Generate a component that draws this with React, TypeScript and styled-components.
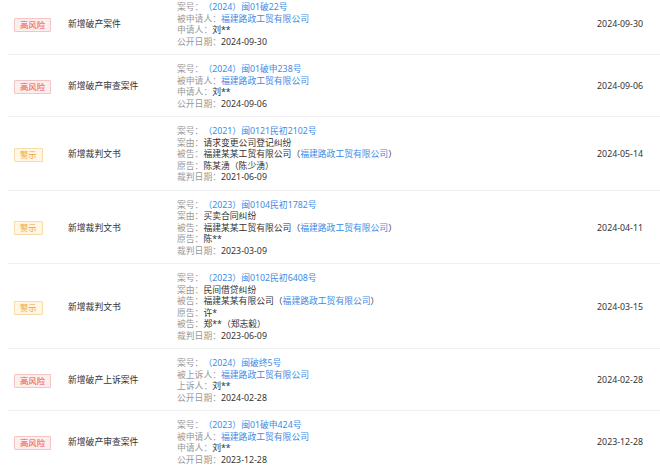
import React from "react";
import styled, { createGlobalStyle } from "styled-components";

const Global = createGlobalStyle`
  html, body { margin: 0; padding: 0; background: #fff; }
  body {
    font-family: "Noto Sans", "Noto Sans CJK SC", sans-serif;
    overflow: hidden;
    text-spacing-trim: space-all;
  }
`;

const Page = styled.div`
  padding-left: 8px;
  width: 652px;
  margin-top: -8px;
`;

const Row = styled.div`
  display: grid;
  grid-template-columns: 60px 109px 1fr 90px;
  align-items: center;
  border-top: 1px solid #f0f0f0;
  padding: 9px 0 6px;
  font-size: 8.8px;
  line-height: 11.5px;
  color: #333;
`;

const Badge = styled.span<{ $kind: "high" | "warn" }>`
  justify-self: start;
  margin-left: 6px;
  display: inline-block;
  padding: 0 5px;
  height: 12px;
  line-height: 12px;
  font-size: 8.4px;
  border: 1px solid ${(p) => (p.$kind === "high" ? "#f7c4c4" : "#f6dca6")};
  background: ${(p) => (p.$kind === "high" ? "#fdeeee" : "#fff6e3")};
  color: ${(p) => (p.$kind === "high" ? "#ec4d4d" : "#f2a531")};
  border-radius: 1px;
`;

const Category = styled.div`
  color: #333;
`;

const Details = styled.div`
  display: flex;
  flex-direction: column;
`;

const Line = styled.div`
  white-space: nowrap;
  text-spacing-trim: space-all;
`;

const Label = styled.span`
  color: #999;
`;

const Link = styled.span`
  color: #3d8be6;
`;

const DateCell = styled.div`
  text-align: right;
  padding-right: 17px;
  color: #333;
`;

type Part = string | { link: string };
type Item = {
  kind: "high" | "warn";
  badge: string;
  category: string;
  lines: [string, Part[]][];
  date: string;
};

const company = { link: "福建路政工贸有限公司" };

const items: Item[] = [
  {
    kind: "high",
    badge: "高风险",
    category: "新增破产案件",
    lines: [
      ["案号：", [{ link: "（2024）闽01破22号" }]],
      ["被申请人：", [company]],
      ["申请人：", ["刘**"]],
      ["公开日期：", ["2024-09-30"]],
    ],
    date: "2024-09-30",
  },
  {
    kind: "high",
    badge: "高风险",
    category: "新增破产审查案件",
    lines: [
      ["案号：", [{ link: "（2024）闽01破申238号" }]],
      ["被申请人：", [company]],
      ["申请人：", ["刘**"]],
      ["公开日期：", ["2024-09-06"]],
    ],
    date: "2024-09-06",
  },
  {
    kind: "warn",
    badge: "警示",
    category: "新增裁判文书",
    lines: [
      ["案号：", [{ link: "（2021）闽0121民初2102号" }]],
      ["案由：", ["请求变更公司登记纠纷"]],
      ["被告：", ["福建某某工贸有限公司（", company, "）"]],
      ["原告：", ["陈某湧（陈少湧）"]],
      ["裁判日期：", ["2021-06-09"]],
    ],
    date: "2024-05-14",
  },
  {
    kind: "warn",
    badge: "警示",
    category: "新增裁判文书",
    lines: [
      ["案号：", [{ link: "（2023）闽0104民初1782号" }]],
      ["案由：", ["买卖合同纠纷"]],
      ["被告：", ["福建某某工贸有限公司（", company, "）"]],
      ["原告：", ["陈**"]],
      ["裁判日期：", ["2023-03-09"]],
    ],
    date: "2024-04-11",
  },
  {
    kind: "warn",
    badge: "警示",
    category: "新增裁判文书",
    lines: [
      ["案号：", [{ link: "（2023）闽0102民初6408号" }]],
      ["案由：", ["民间借贷纠纷"]],
      ["被告：", ["福建某某有限公司（", company, "）"]],
      ["原告：", ["许*"]],
      ["被告：", ["郑**（郑志毅）"]],
      ["裁判日期：", ["2023-06-09"]],
    ],
    date: "2024-03-15",
  },
  {
    kind: "high",
    badge: "高风险",
    category: "新增破产上诉案件",
    lines: [
      ["案号：", [{ link: "（2024）闽破终5号" }]],
      ["被上诉人：", [company]],
      ["上诉人：", ["刘**"]],
      ["公开日期：", ["2024-02-28"]],
    ],
    date: "2024-02-28",
  },
  {
    kind: "high",
    badge: "高风险",
    category: "新增破产审查案件",
    lines: [
      ["案号：", [{ link: "（2023）闽01破申424号" }]],
      ["被申请人：", [company]],
      ["申请人：", ["刘**"]],
      ["公开日期：", ["2023-12-28"]],
    ],
    date: "2023-12-28",
  },
];

export default function App() {
  return (
    <>
      <Global />
      <Page>
        {items.map((it, i) => (
          <Row key={i}>
            <Badge $kind={it.kind}>{it.badge}</Badge>
            <Category>{it.category}</Category>
            <Details>
              {it.lines.map(([label, parts], j) => (
                <Line key={j}>
                  <Label>{label}</Label>
                  {parts.map((p, k) =>
                    typeof p === "string" ? (
                      <span key={k}>{p}</span>
                    ) : (
                      <Link key={k}>{p.link}</Link>
                    )
                  )}
                </Line>
              ))}
            </Details>
            <DateCell>{it.date}</DateCell>
          </Row>
        ))}
      </Page>
    </>
  );
}
